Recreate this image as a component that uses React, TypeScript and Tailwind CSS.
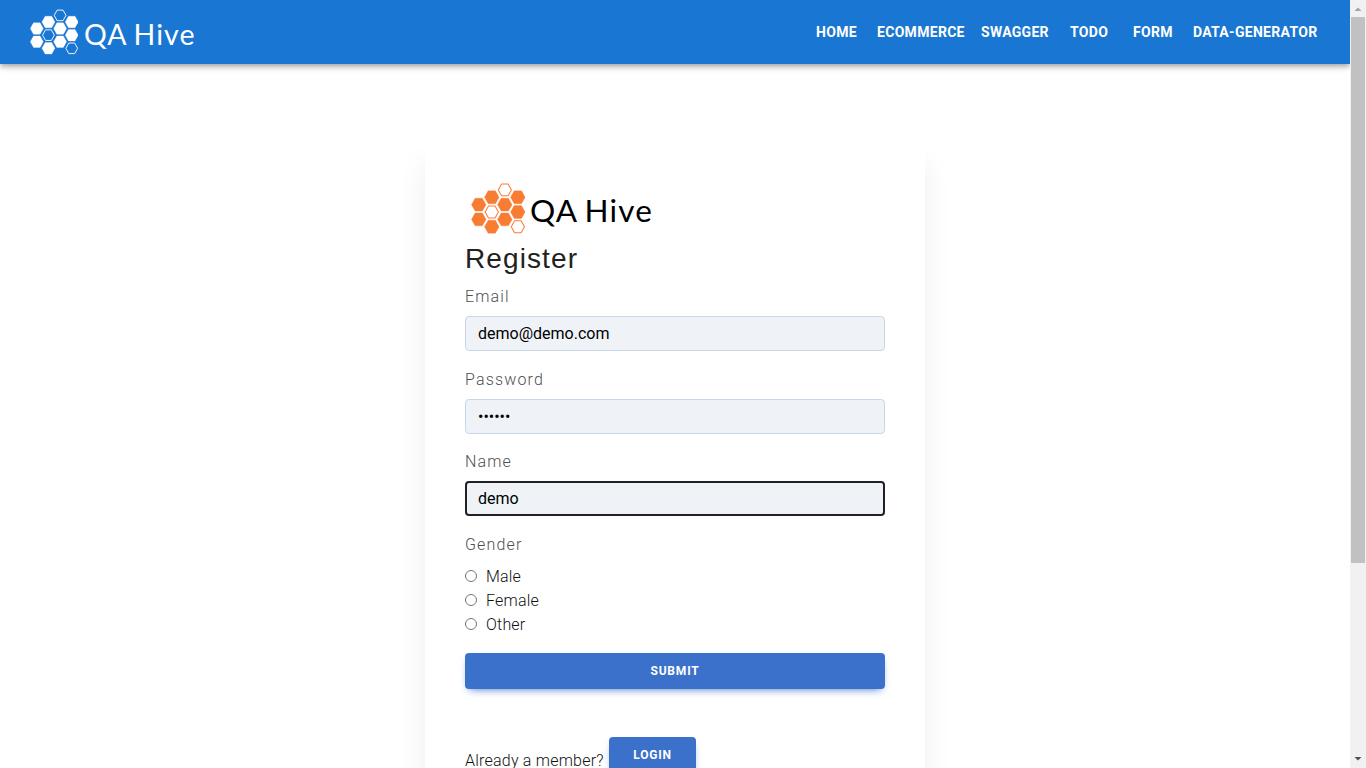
import type { ReactNode } from "react";

const cells: [number, number, boolean][] = [
  [2, 0, false], [1, 1, true], [3, 1, true], [0, 2, true], [2, 2, true], [1, 3, false],
  [3, 3, true], [0, 4, true], [2, 4, true], [1, 5, true], [3, 5, false],
];

function Hive({ className }: { className: string }) {
  return (
    <svg viewBox="0 0 159 151" className={className} fill="currentColor" stroke="currentColor">
      {cells.map(([c, r, solid]) => {
        const x = 22.5 + c * 38.6;
        const y = 20.5 + r * 21.8;
        const w = solid ? 21.5 : 19.5;
        const h = solid ? 19 : 17.5;
        const pts = `${x - w},${y} ${x - w / 2},${y - h} ${x + w / 2},${y - h} ${x + w},${y} ${x + w / 2},${y + h} ${x - w / 2},${y + h}`;
        return <polygon key={`${c}-${r}`} points={pts} fill={solid ? "currentColor" : "none"} strokeWidth={solid ? 1 : 3} strokeLinejoin="round" />;
      })}
    </svg>
  );
}

function Field({ label, children }: { label: string; children: ReactNode }) {
  return (
    <label className="block h-[82.7px]">
      <span className="block h-[31px] text-base leading-6 font-light tracking-[1.15px] text-[#4f4f4f]">{label}</span>
      {children}
    </label>
  );
}

const inputClass =
  "block h-[35px] w-full rounded-[4px] border border-[#c9d7e6] bg-[#eff3f8] px-3 text-base text-black outline-none";

const links = [
  { name: "HOME", className: "w-[61px]" },
  { name: "ECOMMERCE", className: "w-[104px]" },
  { name: "SWAGGER", className: "w-[89px]" },
  { name: "TODO", className: "w-[63px]" },
  { name: "FORM", className: "w-[60px]" },
  { name: "DATA-GENERATOR", className: "w-[157px]" },
];

export default function App() {
  return (
    <div className="flex h-[768px] w-[1366px] overflow-hidden bg-white font-['Roboto',sans-serif]">
      <div className="flex min-w-0 flex-1 flex-col overflow-hidden">
        <header className="z-10 flex h-16 shrink-0 items-center justify-between bg-[#1976d2] text-white shadow-[0_2px_4px_-1px_rgba(0,0,0,0.2),0_4px_5px_0_rgba(0,0,0,0.14),0_1px_10px_0_rgba(0,0,0,0.12)]">
          <a className="flex items-center pl-[30px]">
            <Hive className="h-[46px] w-[48px]" />
            <span className="ml-[6px] pt-[3px] font-['Lato',sans-serif] text-[28.5px] leading-9 tracking-[1.05px] whitespace-nowrap [word-spacing:-1.5px]">QA Hive</span>
          </a>
          <nav className="flex text-sm leading-6 font-bold tracking-[0.3px] whitespace-nowrap">
            {links.map((l) => (
              <a key={l.name} className={l.className}>{l.name}</a>
            ))}
          </nav>
        </header>
        <main className="mx-auto mt-[79px] h-[700px] w-[500px] shrink-0 bg-white px-10 pt-[38px] shadow-[0_20px_27px_0_rgba(0,0,0,0.07)]">
          <div className="flex h-[55px] items-center pl-[6px]">
            <Hive className="h-[51px] w-[54px] text-[#f97c33]" />
            <span className="ml-[5px] pt-[3px] font-['Lato',sans-serif] text-[31.5px] leading-10 tracking-[1.2px] whitespace-nowrap text-black [word-spacing:-2px]">QA Hive</span>
          </div>
          <h1 className="mt-1 h-[45px] font-['Liberation_Sans',Arial,sans-serif] text-[28px] leading-[38px] tracking-[1.1px] text-[#212121]">Register</h1>
          <form>
            <Field label="Email"><input className={inputClass} defaultValue="demo@demo.com" /></Field>
            <Field label="Password"><input type="password" className={inputClass} defaultValue="123456" /></Field>
            <Field label="Name">
              <input className="block h-[35px] w-full rounded-[4px] border-2 border-[#202124] bg-[#eff3f8] px-[11px] text-base text-black outline-none" defaultValue="demo" />
            </Field>
            <fieldset>
              <legend className="h-8 text-base leading-6 font-light tracking-[1.15px] text-[#4f4f4f]">Gender</legend>
              {["Male", "Female", "Other"].map((g) => (
                <label key={g} className="flex h-6 items-center text-base font-light tracking-[0.2px] text-[#111111]">
                  <input type="radio" name="gender" className="mr-[9px] mb-[2px] size-3 appearance-none rounded-full border border-[#767676]" />
                  {g}
                </label>
              ))}
            </fieldset>
            <button type="button" className="mt-4 block h-9 w-full rounded-[4px] bg-[#3b71ca] text-xs font-bold tracking-[0.8px] text-white shadow-[0_4px_9px_-4px_#3b71ca]">SUBMIT</button>
          </form>
          <div className="mt-12 flex items-start text-base font-light text-[#111111]">
            <p className="w-36 pt-3 leading-6 tracking-[0.22px] whitespace-nowrap">Already a member?</p>
            <button type="button" className="h-9 w-[87px] rounded-[4px] bg-[#3b71ca] text-xs font-bold tracking-[0.8px] text-white shadow-[0_4px_9px_-4px_#3b71ca]">LOGIN</button>
          </div>
        </main>
      </div>
      <aside className="flex w-4 shrink-0 flex-col items-center bg-[#f1f1f1]">
        <svg viewBox="0 0 16 17" className="h-[17px] w-4 shrink-0"><path d="M4.5 11L8 7.5 11.5 11z" fill="#a3a3a3" /></svg>
        <div className="h-[546px] w-[14px] bg-[#c1c1c1]" />
        <svg viewBox="0 0 16 17" className="mt-auto h-[17px] w-4 shrink-0"><path d="M4.5 6L8 9.5 11.5 6z" fill="#505050" /></svg>
      </aside>
    </div>
  );
}
